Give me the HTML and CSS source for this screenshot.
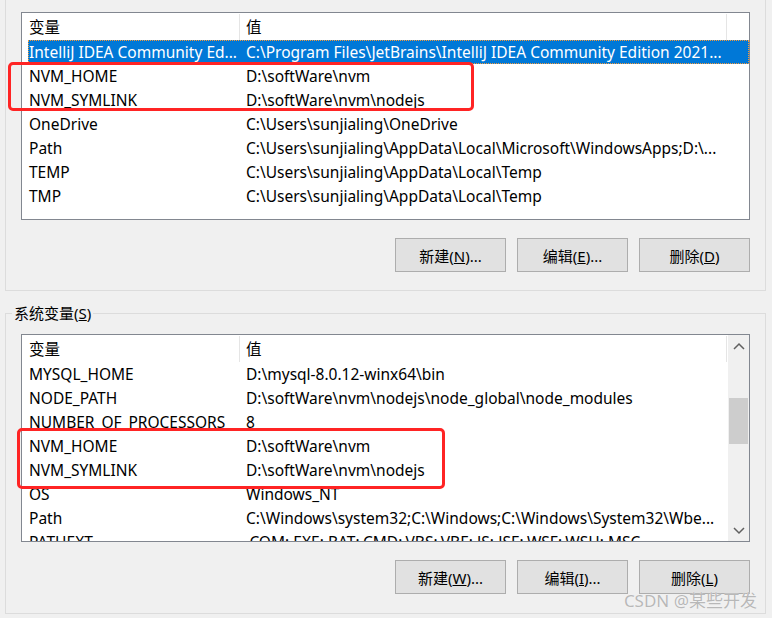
FILE: index.html
```html
<!DOCTYPE html>
<html lang="zh-CN">
<head>
    <meta charset="UTF-8">
    <meta name="viewport" content="width=device-width, initial-scale=1.0">
    <title>环境变量</title>
    <link rel="stylesheet" href="styles.css">
</head>
<body>

    <div class="page">

        <!-- User variables -->
        <div class="group user-group">
            <div class="group-body">
                <div class="list">
                    <div class="list-body">
                        <div class="row head">
                            <span class="c1">变量</span>
                            <span class="c2">值</span>
                        </div>
                        <div class="row selected">
                            <span class="c1">IntelliJ IDEA Community Ed...</span>
                            <span class="c2">C:\Program Files\JetBrains\IntelliJ IDEA Community Edition 2021...</span>
                        </div>
                        <div class="row"><span class="c1">NVM_HOME</span><span class="c2">D:\softWare\nvm</span></div>
                        <div class="row"><span class="c1">NVM_SYMLINK</span><span class="c2">D:\softWare\nvm\nodejs</span></div>
                        <div class="row"><span class="c1">OneDrive</span><span class="c2">C:\Users\sunjialing\OneDrive</span></div>
                        <div class="row"><span class="c1">Path</span><span class="c2">C:\Users\sunjialing\AppData\Local\Microsoft\WindowsApps;D:\...</span></div>
                        <div class="row"><span class="c1">TEMP</span><span class="c2">C:\Users\sunjialing\AppData\Local\Temp</span></div>
                        <div class="row"><span class="c1">TMP</span><span class="c2">C:\Users\sunjialing\AppData\Local\Temp</span></div>
                    </div>
                </div>
                <div class="buttons">
                    <button>新建(<u>N</u>)...</button>
                    <button>编辑(<u>E</u>)...</button>
                    <button>删除(<u>D</u>)</button>
                </div>
            </div>
        </div>

        <!-- System variables -->
        <fieldset class="group system-group">
            <legend>系统变量(<u>S</u>)</legend>
            <div class="group-body">
                <div class="list">
                    <div class="list-body">
                        <div class="row head">
                            <span class="c1">变量</span>
                            <span class="c2">值</span>
                        </div>
                        <div class="row"><span class="c1">MYSQL_HOME</span><span class="c2">D:\mysql-8.0.12-winx64\bin</span></div>
                        <div class="row"><span class="c1">NODE_PATH</span><span class="c2">D:\softWare\nvm\nodejs\node_global\node_modules</span></div>
                        <div class="row"><span class="c1">NUMBER_OF_PROCESSORS</span><span class="c2">8</span></div>
                        <div class="row"><span class="c1">NVM_HOME</span><span class="c2">D:\softWare\nvm</span></div>
                        <div class="row"><span class="c1">NVM_SYMLINK</span><span class="c2">D:\softWare\nvm\nodejs</span></div>
                        <div class="row"><span class="c1">OS</span><span class="c2">Windows_NT</span></div>
                        <div class="row"><span class="c1">Path</span><span class="c2">C:\Windows\system32;C:\Windows;C:\Windows\System32\Wbe...</span></div>
                        <div class="row"><span class="c1">PATHEXT</span><span class="c2">.COM;.EXE;.BAT;.CMD;.VBS;.VBE;.JS;.JSE;.WSF;.WSH;.MSC</span></div>
                    </div>
                    <div class="vscroll">
                        <div class="arrow">
                            <svg width="12" height="8" viewBox="0 0 12 8"><path d="M1 7 L6 2 L11 7" fill="none" stroke="#606060" stroke-width="1.5"/></svg>
                        </div>
                        <div class="track"><div class="thumb"></div></div>
                        <div class="arrow">
                            <svg width="12" height="8" viewBox="0 0 12 8"><path d="M1 1 L6 6 L11 1" fill="none" stroke="#606060" stroke-width="1.5"/></svg>
                        </div>
                    </div>
                </div>
                <div class="buttons">
                    <button>新建(<u>W</u>)...</button>
                    <button>编辑(<u>I</u>)...</button>
                    <button>删除(<u>L</u>)</button>
                </div>
            </div>
        </fieldset>

    </div>

    <!-- Highlight marks -->
    <div class="mark mark-user"></div>
    <div class="mark mark-system"></div>

    <div class="watermark">CSDN @某些开发</div>

</body>
</html>
```

FILE: styles.css
```css
body {
    margin: 0;
    width: 772px;
    height: 618px;
    overflow: hidden;
    position: relative;
    background-color: #f0f0f0;
    font-family: "Noto Sans", "Noto Sans CJK SC", sans-serif;
    font-size: 15px;
    color: #000;
}
.page {
    padding-left: 5px;
    width: 761px;
}
.group {
    border: 1px solid #dcdcdc;
    box-sizing: border-box;
    width: 761px;
}
.user-group {
    border-top: none;
    padding: 12px 0 18px;
}
.system-group {
    margin: 12px 0 0;
    padding: 11px 0 19px;
    min-width: 0;
}
.system-group legend {
    margin-left: 6px;
    padding: 0 2px;
    line-height: 20px;
}
.group-body {
    padding: 0 15px;
}
.list {
    display: flex;
    height: 208px;
    box-sizing: border-box;
    border: 1px solid #828790;
    background-color: #fff;
    overflow: hidden;
}
.list-body {
    flex: 1;
    padding-left: 6px;
    overflow: hidden;
}
.row {
    display: grid;
    grid-template-columns: 212px 487px;
    height: 24px;
    line-height: 24px;
    font-size: 15.5px;
    white-space: nowrap;
}
.row span {
    overflow: hidden;
}
.row .c1 {
    padding-left: 1px;
}
.row .c2 {
    padding-left: 6px;
}
.head {
    height: 27px;
    line-height: 27px;
}
.head span {
    box-sizing: border-box;
    border-right: 1px solid #e5e5e5;
    margin: 1px 0 0;
}
.selected {
    background-color: #0078d7;
    color: #fff;
    outline: 1px dotted #f59a3a;
    outline-offset: -1px;
}
.vscroll {
    width: 21px;
    display: flex;
    flex-direction: column;
    background-color: #f0f0f0;
    margin-left: 1px;
}
.arrow {
    height: 21px;
    display: flex;
    align-items: center;
    justify-content: center;
}
.track {
    flex: 1;
}
.thumb {
    margin: 42px 1px 0;
    height: 46px;
    background-color: #cdcdcd;
}
.buttons {
    display: flex;
    justify-content: flex-end;
    gap: 11px;
    margin-top: 18px;
}
.buttons button {
    width: 111px;
    height: 34px;
    padding: 0;
    background-color: #e1e1e1;
    border: 1px solid #adadad;
    font-family: inherit;
    font-size: 15px;
    color: #000;
}
.mark {
    position: absolute;
    box-sizing: border-box;
    border: 3px solid #ff2424;
    border-radius: 5px;
}
.mark-user {
    left: 8px;
    top: 62px;
    width: 466px;
    height: 49px;
}
.mark-system {
    left: 17px;
    top: 428px;
    width: 428px;
    height: 61px;
}
.watermark {
    position: absolute;
    right: 15px;
    bottom: 6px;
    font-size: 17px;
    color: #b8b8b8;
    text-shadow: 0 0 1px #fff;
}
```
